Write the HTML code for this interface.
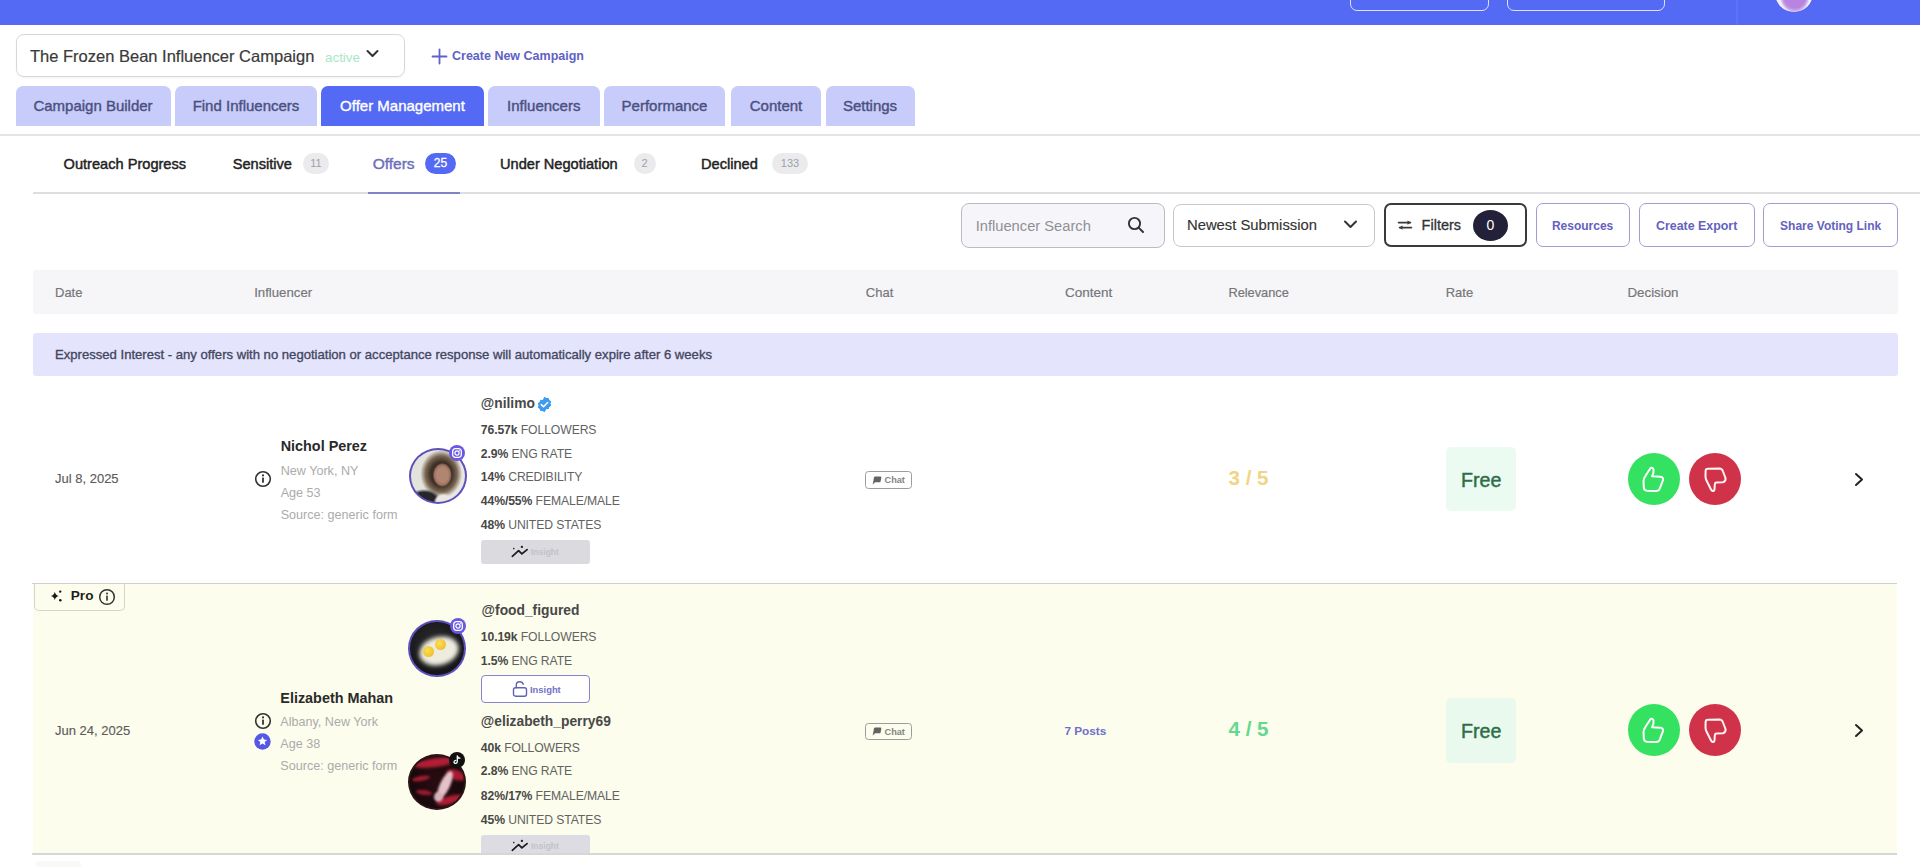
<!DOCTYPE html>
<html><head><meta charset="utf-8">
<style>
*{box-sizing:border-box;margin:0;padding:0}
html,body{width:1920px;height:867px;overflow:hidden;background:#fff}
body{position:relative;font-family:"Liberation Sans",sans-serif;color:#333}
.a{position:absolute}
.t{position:absolute;line-height:1;white-space:nowrap}
.topbar{left:0;top:0;width:1920px;height:25px;background:#546AF4}
.tab{position:absolute;top:86px;height:40px;background:#C7CCFA;border-radius:7px 7px 0 0}
.tab span{position:absolute;left:0;right:0;text-align:center;top:12px;line-height:1;font-size:15px;color:#4C5080;-webkit-text-stroke:0.4px #4C5080;white-space:nowrap}
.tab.on{background:#546AF4}
.tab.on span{color:#fff;-webkit-text-stroke:0.35px #fff}
.sub{font-size:14.6px;color:#222;-webkit-text-stroke:0.45px #222}
.badge{position:absolute;height:21px;border-radius:11px;background:#EBEBEE;color:#A0A0A6;font-size:11px;line-height:21px;text-align:center}
.btn{position:absolute;top:203px;height:44px;border-radius:7px}
.obtn{border:1.8px solid #A09ED0;background:#fff}
.obtn span{position:absolute;left:0;right:0;text-align:center;top:15.5px;line-height:1;font-size:12px;font-weight:700;color:#6462BE;white-space:nowrap}
.hd{font-size:13px;color:#76767A;top:286px;-webkit-text-stroke:0.2px #76767A}
.stat{font-size:12.2px;color:#626262;letter-spacing:-0.1px}
.stat b{color:#474747}
.loc{font-size:12.6px;color:#ABABAB}
.nm{font-size:14.4px;font-weight:700;color:#2A2A2A}
.date{font-size:13px;color:#5C5C5C;-webkit-text-stroke:0.15px #5C5C5C}
</style></head><body>

<!-- top bar -->
<div class="a topbar"></div>
<div class="a" style="left:1350px;top:-20px;width:139px;height:31px;border:1.8px solid rgba(255,255,255,.8);border-radius:7px"></div>
<div class="a" style="left:1507px;top:-20px;width:158px;height:31px;border:1.8px solid rgba(255,255,255,.8);border-radius:7px"></div>
<div class="a" style="left:1736px;top:0;width:2px;height:25px;background:#5D72F6"></div>
<div class="a" style="left:1775px;top:-26px;width:38px;height:38px;border-radius:50%;background:radial-gradient(ellipse 15px 16px at 52% 60%,#B884E2 0 70%,#C9A6EC 85%,#F4F0FA 100%)"></div>

<!-- campaign selector -->
<div class="a" style="left:16px;top:34px;width:389px;height:43px;border:1px solid #D8D8D8;border-radius:8px;box-shadow:0 1px 2px rgba(0,0,0,.06)"></div>
<div class="t" style="left:30px;top:47.5px;font-size:16.5px;color:#3A3A3A;-webkit-text-stroke:0.2px #3A3A3A">The Frozen Bean Influencer Campaign</div>
<div class="t" style="left:325px;top:50.5px;font-size:13.4px;color:#A6E8C6">active</div>
<svg class="a" style="left:366px;top:49px" width="13" height="10" viewBox="0 0 13 10"><path d="M1.5 2 L6.5 7 L11.5 2" fill="none" stroke="#333" stroke-width="2" stroke-linecap="round" stroke-linejoin="round"/></svg>
<svg class="a" style="left:431px;top:48px" width="17" height="17" viewBox="0 0 17 17"><path d="M8.5 1.5V15.5M1.5 8.5H15.5" stroke="#6062C4" stroke-width="1.8" stroke-linecap="round"/></svg>
<div class="t" style="left:452px;top:50.2px;font-size:12.5px;font-weight:700;color:#6062C4">Create New Campaign</div>

<!-- tabs -->
<div class="tab" style="left:15.5px;width:155px"><span>Campaign Builder</span></div>
<div class="tab" style="left:175px;width:142px"><span>Find Influencers</span></div>
<div class="tab on" style="left:321px;width:163px"><span>Offer Management</span></div>
<div class="tab" style="left:488px;width:111.5px"><span>Influencers</span></div>
<div class="tab" style="left:604px;width:121px"><span>Performance</span></div>
<div class="tab" style="left:731px;width:90px"><span>Content</span></div>
<div class="tab" style="left:825.5px;width:89px"><span>Settings</span></div>
<div class="a" style="left:0;top:134px;width:1920px;height:2px;background:#E4E4E6"></div>

<!-- sub tabs -->
<div class="t sub" style="left:63.6px;top:157px">Outreach Progress</div>
<div class="t sub" style="left:232.7px;top:157px">Sensitive</div>
<div class="badge" style="left:302.7px;top:153px;width:26.3px">11</div>
<div class="t sub" style="left:372.7px;top:156.3px;font-size:15.5px;color:#6D71BA;-webkit-text-stroke:0.45px #6D71BA">Offers</div>
<div class="badge" style="left:425.4px;top:153px;width:30.2px;background:#546AF4;color:#fff;font-size:12px;-webkit-text-stroke:0.3px #fff">25</div>
<div class="t sub" style="left:500px;top:157px">Under Negotiation</div>
<div class="badge" style="left:633.6px;top:153px;width:22px">2</div>
<div class="t sub" style="left:701px;top:157px">Declined</div>
<div class="badge" style="left:772.3px;top:153px;width:35.5px">133</div>
<div class="a" style="left:33px;top:192px;width:1887px;height:1.5px;background:#DEDEE0"></div>
<div class="a" style="left:368px;top:191.5px;width:92px;height:2.5px;background:#8084C4"></div>

<!-- toolbar -->
<div class="btn" style="left:961px;top:202.5px;width:203.5px;height:45.5px;background:#F6F6FA;border:1.8px solid #BBBBC0;border-radius:8px"></div>
<div class="t" style="left:975.7px;top:219.3px;font-size:14.7px;color:#909094">Influencer Search</div>
<svg class="a" style="left:1127px;top:216px" width="18" height="18" viewBox="0 0 18 18"><circle cx="7.5" cy="7.5" r="5.6" fill="none" stroke="#333" stroke-width="1.9"/><path d="M11.6 11.6L16 16" stroke="#333" stroke-width="2" stroke-linecap="round"/></svg>
<div class="btn" style="left:1173px;top:203.7px;width:202px;height:43px;background:#fff;border:1.5px solid #C8C8CC;border-radius:8px"></div>
<div class="t" style="left:1187px;top:218px;font-size:14.8px;color:#333;-webkit-text-stroke:0.15px #333">Newest Submission</div>
<svg class="a" style="left:1343px;top:219px" width="15" height="10" viewBox="0 0 15 10"><path d="M2 2.5L7.5 8L13 2.5" fill="none" stroke="#333" stroke-width="2" stroke-linecap="round" stroke-linejoin="round"/></svg>
<div class="btn" style="left:1384px;top:203.4px;width:143px;height:43.6px;border:2px solid #3A3A3A;border-radius:7px;background:#fff"></div>
<svg class="a" style="left:1397px;top:218px" width="16" height="14" viewBox="0 0 16 14"><path d="M1.5 4.6H13.5M2.5 9.6H14.5" stroke="#3A3A3A" stroke-width="1.6" stroke-linecap="round"/><path d="M10.5 2.4L14 4.6L10.5 6.8Z" fill="#3A3A3A"/><path d="M5.5 7.4L2 9.6L5.5 11.8Z" fill="#3A3A3A"/></svg>
<div class="t" style="left:1421.6px;top:217.9px;font-size:14.5px;color:#333;-webkit-text-stroke:0.3px #333">Filters</div>
<div class="a" style="left:1473px;top:209.5px;width:35px;height:31px;border-radius:50%;background:#23213A;color:#fff;font-size:14px;line-height:31px;text-align:center">0</div>
<div class="btn obtn" style="left:1535.5px;width:94.2px"><span>Resources</span></div>
<div class="btn obtn" style="left:1638.7px;width:116px"><span style="font-size:12.4px">Create Export</span></div>
<div class="btn obtn" style="left:1763.3px;width:134.7px"><span>Share Voting Link</span></div>

<!-- table header -->
<div class="a" style="left:32.5px;top:270px;width:1865px;height:44px;background:#F6F6F9;border-radius:3px"></div>
<div class="t hd" style="left:55px">Date</div>
<div class="t hd" style="left:254.2px;font-size:13.2px">Influencer</div>
<div class="t hd" style="left:865.8px">Chat</div>
<div class="t hd" style="left:1065px;font-size:13.5px">Content</div>
<div class="t hd" style="left:1228.4px;font-size:12.8px;top:286.6px">Relevance</div>
<div class="t hd" style="left:1445.7px;font-size:13px">Rate</div>
<div class="t hd" style="left:1627.5px;font-size:13.3px">Decision</div>

<!-- banner -->
<div class="a" style="left:33px;top:332.5px;width:1865px;height:43px;background:#E4E5FD;border-radius:3px"></div>
<div class="t" style="left:55px;top:347.7px;font-size:13.1px;color:#45475F;-webkit-text-stroke:0.35px #45475F">Expressed Interest - any offers with no negotiation or acceptance response will automatically expire after 6 weeks</div>

<!-- ROW 1 -->
<div class="t date" style="left:55px;top:471.9px">Jul 8, 2025</div>


<!-- ROW 1 content -->
<svg class="a" style="left:254px;top:470px" width="18" height="18" viewBox="0 0 18 18"><circle cx="9" cy="9" r="7.3" fill="none" stroke="#333" stroke-width="1.6"/><rect x="8.1" y="7.6" width="1.8" height="5.2" rx=".5" fill="#333"/><circle cx="9" cy="5.4" r="1.05" fill="#333"/></svg>
<div class="t nm" style="left:280.7px;top:438.8px">Nichol Perez</div>
<div class="t loc" style="left:280.7px;top:464.9px">New York, NY</div>
<div class="t loc" style="left:280.7px;top:486.7px">Age 53</div>
<div class="t loc" style="left:280.7px;top:508.5px">Source: generic form</div>
<div class="a" style="left:408.5px;top:447.5px;width:58px;height:56px;border-radius:50%;border:2.2px solid #5C50BC;overflow:hidden;background:
radial-gradient(ellipse 9.5px 12px at 58% 48%,#B08672 0 60%,#9A705E 85%,transparent 100%),
radial-gradient(ellipse 10px 9px at 60% 100%,#ECE8E0 0 70%,transparent 100%),
radial-gradient(ellipse 18px 13px at 24% 100%,#26262A 0 75%,transparent 100%),
radial-gradient(ellipse 21px 24px at 56% 46%,#3E3028 0 50%,#7A6650 75%,transparent 100%),
linear-gradient(90deg,#E2E3DC 0%,#E9E7E2 100%)"></div>
<div class="a" style="left:449px;top:445px;width:16px;height:16px;border-radius:50%;background:#6A58E0"></div>
<svg class="a" style="left:452px;top:448px" width="10" height="10" viewBox="0 0 10 10"><rect x=".7" y=".7" width="8.6" height="8.6" rx="2.6" fill="none" stroke="#fff" stroke-width="1.3"/><circle cx="5" cy="5" r="2.1" fill="none" stroke="#fff" stroke-width="1.2"/><circle cx="7.4" cy="2.6" r=".55" fill="#fff"/></svg>

<div class="t nm" style="left:480.8px;top:397.4px;font-size:13.8px;color:#484848">@nilimo</div>
<svg class="a" style="left:535.5px;top:395.5px" width="17" height="17" viewBox="0 0 24 24"><path fill="#3D9BEF" d="M12 1l2.6 1.9 3.2-.2 1 3.1 2.7 1.8-1 3.1 1 3.1-2.7 1.8-1 3.1-3.2-.2L12 23l-2.6-1.9-3.2.2-1-3.1-2.7-1.8 1-3.1-1-3.1 2.7-1.8 1-3.1 3.2.2z"/><path d="M7.5 12.2l3 3 6-6" fill="none" stroke="#fff" stroke-width="2.2" stroke-linecap="round" stroke-linejoin="round"/></svg>
<div class="t stat" style="left:480.8px;top:423.7px"><b>76.57k</b> FOLLOWERS</div>
<div class="t stat" style="left:480.8px;top:447.8px"><b>2.9%</b> ENG RATE</div>
<div class="t stat" style="left:480.8px;top:471px"><b>14%</b> CREDIBILITY</div>
<div class="t stat" style="left:480.8px;top:494.9px"><b>44%/55%</b> FEMALE/MALE</div>
<div class="t stat" style="left:480.8px;top:519.2px"><b>48%</b> UNITED STATES</div>
<div class="a" style="left:481.4px;top:539.5px;width:108.6px;height:24.5px;border-radius:3px;background:#DADADF"></div>
<svg class="a" style="left:511px;top:545px" width="18" height="13" viewBox="0 0 18 13"><path d="M1.3 11.3L7.6 5.6L10.9 8.9L16.1 4.6" fill="none" stroke="#1A1A1A" stroke-width="1.7" stroke-linecap="round" stroke-linejoin="round"/><circle cx="2.8" cy="3.6" r=".8" fill="#1A1A1A"/><circle cx="10.9" cy="1.9" r="1.15" fill="#1A1A1A"/></svg>
<div class="t" style="left:531px;top:547.5px;font-size:8.5px;color:#C2C2CA;font-weight:700">Insight</div>

<div class="a" style="left:865px;top:471px;width:46.5px;height:17.5px;border:1.6px solid #9C9C9C;border-radius:3.5px;background:#fff"></div>
<svg class="a" style="left:871.5px;top:475.5px" width="10" height="9" viewBox="0 0 10 9"><path d="M2 1.2Q2.3 .5 3.2 .5H8.4Q9.5 .5 9.3 1.6L8.6 5.4Q8.4 6.3 7.4 6.3H3.2L.6 8.4L1.2 5.9Z" fill="#606462"/></svg>
<div class="t" style="left:884.5px;top:476.3px;font-size:9.2px;font-weight:700;color:#858585">Chat</div>

<div class="t" style="left:1228.5px;top:468.4px;font-size:20.6px;font-weight:700;color:#EFD584">3 / 5</div>
<div class="a" style="left:1446px;top:447px;width:70px;height:64px;border-radius:5px;background:#ECFBF1"></div>
<div class="t" style="left:1461px;top:470.5px;font-size:19.6px;color:#2D6E49;-webkit-text-stroke:0.45px #2D6E49">Free</div>


<svg class="a" style="left:1628px;top:453px" width="52" height="52" viewBox="0 0 52 52"><circle cx="26" cy="26" r="26" fill="#34E160"/><path d="M22.6 15 Q24.6 14 25.5 16.5 Q26.1 19.5 24 23.2 L32.5 23.8 Q35.6 24.4 35 27.2 L31.6 35.8 Q30.6 38 28 38 L19 37.8 Q16 37.6 15.8 34.5 L15.5 28 Q15.8 25 17.5 22.8 Z" fill="none" stroke="#fff" stroke-width="2" stroke-linejoin="round"/></svg>
<svg class="a" style="left:1688.5px;top:453px" width="52" height="52" viewBox="0 0 52 52"><circle cx="26" cy="26" r="26" fill="#D0324A"/><path d="M18.5 15.8 L30.5 15.5 Q33 15.6 34 18.5 L36.5 25 Q37 28.5 34 29.2 L27.3 29.6 Q25.9 29.8 25.8 31.5 L25.5 36.5 Q25 38.5 23.3 37.8 Q22.3 37.2 21.5 35.5 L17.5 27.5 Q16.5 25.5 16.5 23.5 L16.6 18.2 Q16.8 15.8 18.5 15.8 Z" fill="none" stroke="#FFF4F4" stroke-width="2" stroke-linejoin="round"/></svg>
<svg class="a" style="left:1853px;top:472px" width="12" height="15" viewBox="0 0 12 15"><path d="M3 2L9 7.5L3 13" fill="none" stroke="#222" stroke-width="2" stroke-linecap="round" stroke-linejoin="round"/></svg>

<!-- ROW 2 -->
<div class="a" style="left:33px;top:584px;width:1864px;height:269px;background:#FCFDEC"></div>
<div class="a" style="left:32px;top:582.5px;width:1865px;height:1.5px;background:#CFCFCC"></div>
<div class="a" style="left:32px;top:853px;width:1865px;height:1.5px;background:#D6D6D2"></div>
<div class="t date" style="left:55px;top:723.6px">Jun 24, 2025</div>


<!-- ROW 2 content -->
<div class="a" style="left:34px;top:583.5px;width:90.5px;height:27px;border:1px solid #D5D5CC;border-top:none;border-radius:0 0 5px 5px;background:#FCFDEC"></div>
<svg class="a" style="left:50px;top:589px" width="13" height="14" viewBox="0 0 13 14"><path d="M4.8 2.8 Q5.4 6.3 8.8 7 Q5.4 7.7 4.8 11.2 Q4.2 7.7 0.8 7 Q4.2 6.3 4.8 2.8Z" fill="#1A1A1A"/><circle cx="10.2" cy="2.6" r="1.2" fill="#1A1A1A"/><circle cx="10.3" cy="11.3" r="1.3" fill="#1A1A1A"/></svg>
<div class="t" style="left:70.8px;top:589px;font-size:13.6px;font-weight:700;color:#1E1E1E">Pro</div>
<svg class="a" style="left:97.5px;top:587.5px" width="18" height="18" viewBox="0 0 18 18"><circle cx="9" cy="9" r="7.3" fill="none" stroke="#333" stroke-width="1.5"/><rect x="8.2" y="7.6" width="1.6" height="5.2" rx=".5" fill="#333"/><circle cx="9" cy="5.4" r="1" fill="#333"/></svg>

<svg class="a" style="left:254px;top:712px" width="18" height="18" viewBox="0 0 18 18"><circle cx="9" cy="9" r="7.3" fill="none" stroke="#333" stroke-width="1.6"/><rect x="8.1" y="7.6" width="1.8" height="5.2" rx=".5" fill="#333"/><circle cx="9" cy="5.4" r="1.05" fill="#333"/></svg>
<svg class="a" style="left:254px;top:733px" width="17" height="17" viewBox="0 0 17 17"><circle cx="8.5" cy="8.5" r="8.2" fill="#5558E4"/><path d="M8.5 3.6l1.4 3 3.2.3-2.4 2.1.7 3.2-2.9-1.7-2.9 1.7.7-3.2-2.4-2.1 3.2-.3z" fill="#fff"/></svg>
<div class="t nm" style="left:280.3px;top:690.8px">Elizabeth Mahan</div>
<div class="t loc" style="left:280.3px;top:716.1px">Albany, New York</div>
<div class="t loc" style="left:280.3px;top:737.8px">Age 38</div>
<div class="t loc" style="left:280.3px;top:759.9px">Source: generic form</div>

<div class="a" style="left:408.4px;top:619.8px;width:58px;height:57.5px;border-radius:50%;border:2.2px solid #5C50BC;overflow:hidden;background:radial-gradient(circle at 45% 40%,#2C2C30 0%,#161618 70%,#2A2A30 100%)">
<div class="a" style="left:9px;top:15px;width:40px;height:28px;border-radius:50%;background:#EEEBDF;filter:blur(2px);transform:rotate(-15deg)"></div>
<div class="a" style="left:13px;top:24px;width:11px;height:11px;border-radius:50%;background:radial-gradient(circle at 40% 40%,#FADF5A,#EDB41A);filter:blur(.6px)"></div>
<div class="a" style="left:25px;top:17px;width:11px;height:11px;border-radius:50%;background:radial-gradient(circle at 40% 40%,#FADF5A,#EDB41A);filter:blur(.6px)"></div>
</div>
<div class="a" style="left:449.5px;top:618px;width:16px;height:16px;border-radius:50%;background:#6A58E0"></div>
<svg class="a" style="left:452.5px;top:621px" width="10" height="10" viewBox="0 0 10 10"><rect x=".7" y=".7" width="8.6" height="8.6" rx="2.6" fill="none" stroke="#fff" stroke-width="1.3"/><circle cx="5" cy="5" r="2.1" fill="none" stroke="#fff" stroke-width="1.2"/><circle cx="7.4" cy="2.6" r=".55" fill="#fff"/></svg>

<div class="a" style="left:408.4px;top:754px;width:58px;height:56px;border-radius:50%;border:2px solid #2A1418;overflow:hidden;background:radial-gradient(circle at 50% 50%,#2A0C12 0%,#14080A 80%)">
<div class="a" style="left:4px;top:2px;width:44px;height:9px;border-radius:50%;background:#B21E36;filter:blur(1.5px);transform:rotate(-8deg)"></div>
<div class="a" style="left:2px;top:20px;width:18px;height:5px;border-radius:50%;background:#A01C30;filter:blur(1px);transform:rotate(-10deg)"></div>
<div class="a" style="left:6px;top:34px;width:16px;height:5px;border-radius:50%;background:#9A1A2E;filter:blur(1px);transform:rotate(8deg)"></div>
<div class="a" style="left:36px;top:14px;width:20px;height:10px;border-radius:50%;background:#A81C32;filter:blur(1.5px);transform:rotate(20deg)"></div>
<div class="a" style="left:26px;top:40px;width:28px;height:8px;border-radius:50%;background:#B01E34;filter:blur(1.5px);transform:rotate(-15deg)"></div>
<div class="a" style="left:30px;top:14px;width:10px;height:30px;border-radius:50%;background:#E4C2C8;filter:blur(1px);transform:rotate(25deg)"></div>
<div class="a" style="left:24px;top:36px;width:9px;height:10px;border-radius:50%;background:#D8B0B8;filter:blur(1px)"></div>
</div>
<div class="a" style="left:448.5px;top:751.5px;width:16px;height:16px;border-radius:50%;background:#111"></div>
<svg class="a" style="left:451.5px;top:754.5px" width="10" height="10" viewBox="0 0 10 10"><path d="M5.3 1V6.6Q5.3 8.4 3.6 8.4Q2 8.4 2 6.9Q2 5.4 3.8 5.3M5.3 1Q5.8 3 7.9 3.2" fill="none" stroke="#fff" stroke-width="1.3" stroke-linecap="round"/></svg>

<div class="t nm" style="left:481.6px;top:603.6px;font-size:13.8px;color:#484848">@food_figured</div>
<div class="t stat" style="left:480.8px;top:630.5px"><b>10.19k</b> FOLLOWERS</div>
<div class="t stat" style="left:480.8px;top:655px"><b>1.5%</b> ENG RATE</div>
<div class="a" style="left:481.3px;top:675.4px;width:108.5px;height:27.2px;border:1.5px solid #8584CC;border-radius:4px;background:#fff"></div>
<svg class="a" style="left:511.5px;top:679.5px" width="16" height="17" viewBox="0 0 16 17"><rect x="1.5" y="7.8" width="13" height="8.4" rx="2" fill="none" stroke="#6262B4" stroke-width="1.4"/><path d="M4.3 7.8V5Q4.3 1.8 7.6 1.8Q10.6 1.8 11.3 4.2" fill="none" stroke="#6262B4" stroke-width="1.4" stroke-linecap="round"/></svg>
<div class="t" style="left:530px;top:684.5px;font-size:9.4px;font-weight:700;color:#7272C6">Insight</div>
<div class="t nm" style="left:480.8px;top:715.2px;font-size:13.8px;color:#484848">@elizabeth_perry69</div>
<div class="t stat" style="left:480.8px;top:742.1px"><b>40k</b> FOLLOWERS</div>
<div class="t stat" style="left:480.8px;top:765px"><b>2.8%</b> ENG RATE</div>
<div class="t stat" style="left:480.8px;top:789.5px"><b>82%/17%</b> FEMALE/MALE</div>
<div class="t stat" style="left:480.8px;top:813.9px"><b>45%</b> UNITED STATES</div>
<div class="a" style="left:481.4px;top:835px;width:108.6px;height:18px;border-radius:3px 3px 0 0;background:#DCDCE2"></div>
<svg class="a" style="left:511px;top:839px" width="18" height="13" viewBox="0 0 18 13"><path d="M1.3 11.3L7.6 5.6L10.9 8.9L16.1 4.6" fill="none" stroke="#1A1A1A" stroke-width="1.7" stroke-linecap="round" stroke-linejoin="round"/><circle cx="2.8" cy="3.6" r=".8" fill="#1A1A1A"/><circle cx="10.9" cy="1.9" r="1.15" fill="#1A1A1A"/></svg>
<div class="t" style="left:531px;top:842px;font-size:8.5px;color:#C2C2CA;font-weight:700">Insight</div>

<div class="a" style="left:865px;top:722.7px;width:46.5px;height:17.5px;border:1.6px solid #9C9C9C;border-radius:3.5px;background:#FCFDEC"></div>
<svg class="a" style="left:871.5px;top:727.2px" width="10" height="9" viewBox="0 0 10 9"><path d="M2 1.2Q2.3 .5 3.2 .5H8.4Q9.5 .5 9.3 1.6L8.6 5.4Q8.4 6.3 7.4 6.3H3.2L.6 8.4L1.2 5.9Z" fill="#606462"/></svg>
<div class="t" style="left:884.5px;top:728px;font-size:9.2px;font-weight:700;color:#858585">Chat</div>
<div class="t" style="left:1064.4px;top:725.5px;font-size:11.8px;font-weight:700;color:#6E6ECC">7 Posts</div>
<div class="t" style="left:1228.5px;top:719px;font-size:20.6px;font-weight:700;color:#62D891">4 / 5</div>
<div class="a" style="left:1446px;top:698.4px;width:70px;height:65px;border-radius:5px;background:#E9F9EE"></div>
<div class="t" style="left:1461px;top:721.8px;font-size:19.6px;color:#2D6E49;-webkit-text-stroke:0.45px #2D6E49">Free</div>



<svg class="a" style="left:1628px;top:704px" width="52" height="52" viewBox="0 0 52 52"><circle cx="26" cy="26" r="26" fill="#34E160"/><path d="M22.6 15 Q24.6 14 25.5 16.5 Q26.1 19.5 24 23.2 L32.5 23.8 Q35.6 24.4 35 27.2 L31.6 35.8 Q30.6 38 28 38 L19 37.8 Q16 37.6 15.8 34.5 L15.5 28 Q15.8 25 17.5 22.8 Z" fill="none" stroke="#fff" stroke-width="2" stroke-linejoin="round"/></svg>
<svg class="a" style="left:1688.5px;top:704px" width="52" height="52" viewBox="0 0 52 52"><circle cx="26" cy="26" r="26" fill="#D0324A"/><path d="M18.5 15.8 L30.5 15.5 Q33 15.6 34 18.5 L36.5 25 Q37 28.5 34 29.2 L27.3 29.6 Q25.9 29.8 25.8 31.5 L25.5 36.5 Q25 38.5 23.3 37.8 Q22.3 37.2 21.5 35.5 L17.5 27.5 Q16.5 25.5 16.5 23.5 L16.6 18.2 Q16.8 15.8 18.5 15.8 Z" fill="none" stroke="#FFF4F4" stroke-width="2" stroke-linejoin="round"/></svg>
<svg class="a" style="left:1853px;top:723px" width="12" height="15" viewBox="0 0 12 15"><path d="M3 2L9 7.5L3 13" fill="none" stroke="#222" stroke-width="2" stroke-linecap="round" stroke-linejoin="round"/></svg>

<div class="a" style="left:36px;top:861px;width:45px;height:6px;border-radius:3px 3px 0 0;background:#F9F9F7"></div>
</body></html>
